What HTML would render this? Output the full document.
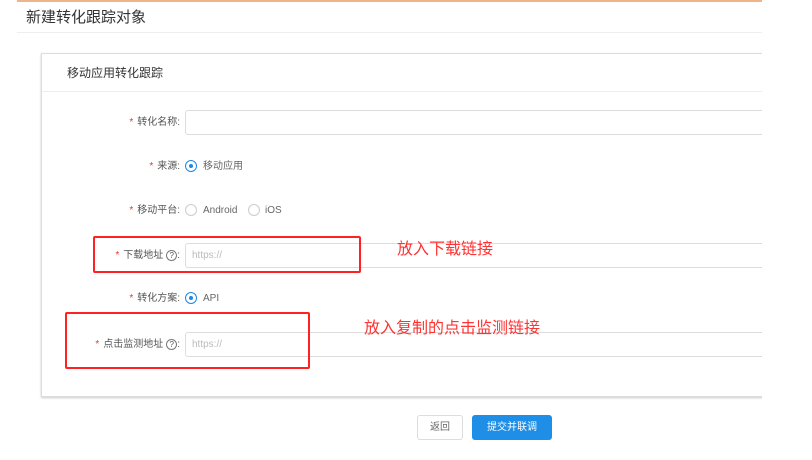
<!DOCTYPE html>
<html><head><meta charset="utf-8"><style>
body{margin:0;width:812px;height:460px;background:#fff;position:relative;overflow:hidden;font-family:"Liberation Sans","Noto Sans CJK SC",sans-serif;}
.a{position:absolute}
.clip{position:absolute;left:0;top:0;width:762px;height:460px;overflow:hidden}
.lbl{position:absolute;font-size:10px;line-height:12px;color:#555;text-align:right;width:170px;left:10px}
.lbl i{color:#e33;font-style:normal;margin-right:4px}
.inp{position:absolute;left:185px;width:600px;height:25px;border:1px solid #ddd;border-radius:3px;box-sizing:border-box;font-size:10px;line-height:12px;color:#bbb;padding:6px 6px}
.rad{position:absolute;width:10px;height:10px;border:1px solid #ccc;border-radius:50%;}
.rad.on{border-color:#1e88e5}
.rad.on:after{content:"";position:absolute;left:3px;top:3px;width:4px;height:4px;border-radius:50%;background:#1e88e5}
.rt{position:absolute;font-size:10px;line-height:12px;color:#666}
.q{display:inline-block;width:9px;height:9px;border:1px solid #777;border-radius:50%;font-size:8px;line-height:9px;text-align:center;margin-left:3px;vertical-align:middle}
.red{position:absolute;border:2px solid #f22;border-radius:2px}
.ann{position:absolute;color:#f33;font-size:16px;line-height:20px}
</style></head><body>
<div class="clip">
<div class="a" style="left:17px;top:0;width:745px;height:2px;background:#eeb48a"></div>
<div class="a" style="left:26px;top:6px;font-size:15px;color:#333">新建转化跟踪对象</div>
<div class="a" style="left:17px;top:32px;width:745px;height:1px;background:#eee"></div>
<div class="a" style="left:41px;top:53px;width:760px;height:342px;border:1px solid #ddd;box-shadow:0 1px 2px #ccc"></div>
<div class="a" style="left:42px;top:91px;width:720px;height:1px;background:#eee"></div>
<div class="a" style="left:67px;top:64px;font-size:12px;color:#333">移动应用转化跟踪</div>

<div class="lbl" style="top:117px"><i>*</i>转化名称:</div>
<div class="inp" style="top:110px"></div>

<div class="lbl" style="top:161px"><i>*</i>来源:</div>
<div class="rad on" style="left:185px;top:160px"></div><div class="rt" style="left:203px;top:161px">移动应用</div>

<div class="lbl" style="top:205px"><i>*</i>移动平台:</div>
<div class="rad" style="left:185px;top:204px"></div><div class="rt" style="left:203px;top:205px">Android</div>
<div class="rad" style="left:248px;top:204px"></div><div class="rt" style="left:265px;top:205px">iOS</div>

<div class="lbl" style="top:250px"><i>*</i>下载地址<span class="q">?</span>:</div>
<div class="inp" style="top:243px">https://</div>

<div class="lbl" style="top:293px"><i>*</i>转化方案:</div>
<div class="rad on" style="left:185px;top:292px"></div><div class="rt" style="left:203px;top:293px">API</div>

<div class="lbl" style="top:339px"><i>*</i>点击监测地址<span class="q">?</span>:</div>
<div class="inp" style="top:332px">https://</div>
</div>

<div class="red" style="left:93px;top:236px;width:264px;height:33px"></div>
<div class="red" style="left:65px;top:312px;width:241px;height:53px"></div>
<div class="ann" style="left:397px;top:240px">放入下载链接</div>
<div class="ann" style="left:364px;top:319px">放入复制的点击监测链接</div>

<div class="a" style="left:417px;top:415px;width:46px;height:25px;border:1px solid #ddd;border-radius:3px;box-sizing:border-box;font-size:10px;color:#666;text-align:center;line-height:23px">返回</div>
<div class="a" style="left:472px;top:415px;width:80px;height:25px;background:#1e8ee6;border-radius:3px;font-size:10px;color:#fff;text-align:center;line-height:25px">提交并联调</div>
</body></html>
